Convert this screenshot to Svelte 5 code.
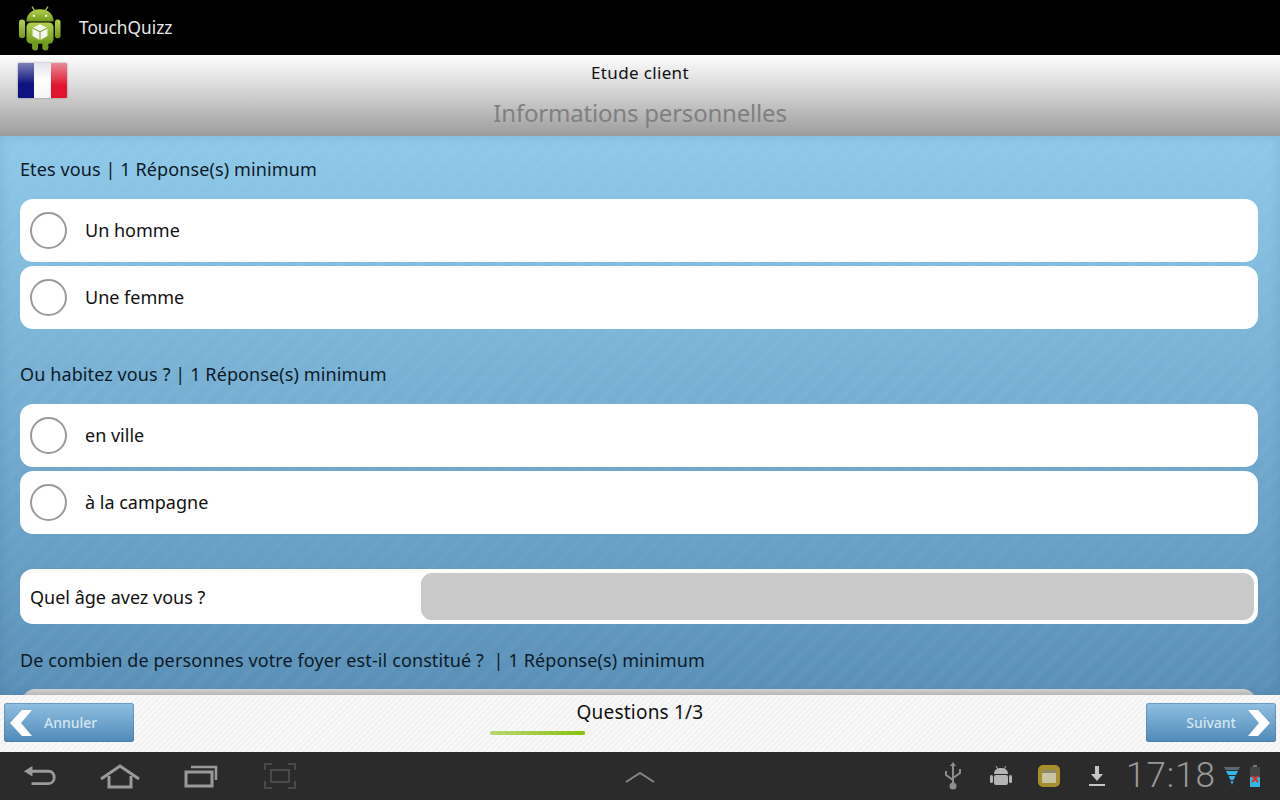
<script>
  // Survey screen of the quiz app, on an Android 3 tablet frame
  const questions = [
    { label: 'Etes vous | 1 Réponse(s) minimum', options: ['Un homme', 'Une femme'] },
    { label: 'Ou habitez vous ? | 1 Réponse(s) minimum', options: ['en ville', 'à la campagne'] },
  ];
</script>

<div class="screen">
  <header class="actionbar">
    <svg class="logo" width="42" height="48" viewBox="0 4 45 48">
      <defs>
        <linearGradient id="droid" x1="0" y1="0" x2="0" y2="1">
          <stop offset="0" stop-color="#b4d24a" />
          <stop offset="1" stop-color="#6f9a1e" />
        </linearGradient>
      </defs>
      <path d="M14 5l3 5M31 5l-3 5" stroke="#9dbb3c" stroke-width="1.500" />
      <path d="M8 21c0-8 6-13 14.500-13S37 13 37 21z" fill="url(#droid)" />
      <circle cx="16" cy="15" r="1.300" fill="#f2f6dc" />
      <circle cx="29" cy="15" r="1.300" fill="#f2f6dc" />
      <rect x="8" y="22" width="29" height="23" rx="5" fill="url(#droid)" />
      <rect x="0" y="19" width="6.500" height="20" rx="3.200" fill="url(#droid)" />
      <rect x="38.500" y="19" width="6" height="20" rx="3" fill="url(#droid)" />
      <rect x="14" y="42" width="6.500" height="10" rx="3.200" fill="#6f9a1e" />
      <rect x="25" y="42" width="6.500" height="10" rx="3.200" fill="#6f9a1e" />
      <path d="M22.500 24l8 4v8.500l-8 4.500-8-4.500V28z" fill="#f4f6ee" />
      <path d="M22.500 32l8-4M22.500 32l-8-4M22.500 32v9" stroke="#8aa93a" stroke-width="1.300" fill="none" />
    </svg>
    <span class="app-name">TouchQuizz</span>
  </header>

  <section class="titlebar">
    <div class="flag"><i class="blue"></i><i class="white"></i><i class="red"></i></div>
    <div class="survey">Etude client</div>
    <h1>Informations personnelles</h1>
  </section>

  <main class="content">
    {#each questions as q}
      <p class="question">{q.label}</p>
      <div class="options">
        {#each q.options as option}
          <div class="option">
            <span class="radio"></span>
            <span>{option}</span>
          </div>
        {/each}
      </div>
    {/each}

    <div class="age">
      <span>Quel âge avez vous ?</span>
      <div class="input"></div>
    </div>

    <p class="question last">De combien de personnes votre foyer est-il constitué ? &nbsp;| 1 Réponse(s) minimum</p>
    <div class="option peek"></div>
  </main>

  <footer class="footer">
    <button class="nav-btn">
      <svg width="26" height="28" viewBox="0 0 26 28"><path d="M14 1h10L13 14l11 13H14L2 14z" fill="#fff" /></svg>
      <span>Annuler</span>
    </button>
    <div class="progress">
      <div class="count">Questions 1/3</div>
      <div class="track"><div class="fill"></div></div>
    </div>
    <button class="nav-btn next">
      <span>Suivant</span>
      <svg width="26" height="28" viewBox="0 0 26 28"><path d="M12 1H2l11 13L2 27h10l12-13z" fill="#fff" /></svg>
    </button>
  </footer>

  <nav class="systembar">
    <div class="softkeys">
      <svg width="34" height="28" viewBox="0 0 36 28" fill="none" stroke="#9a9a9a" stroke-width="3">
        <path d="M6 9h21c8 0 8 13 0 13H9" />
        <path d="M1 9l9-5.500v11z" fill="#9a9a9a" stroke="none" />
      </svg>
      <svg width="42" height="28" viewBox="0 0 42 28" fill="none" stroke="#9a9a9a" stroke-width="3">
        <path d="M2 17L21 4l19 13" />
        <path d="M10 14v11h22V14" />
      </svg>
      <svg width="34" height="28" viewBox="0 0 34 28" fill="none" stroke="#9a9a9a" stroke-width="3">
        <rect x="2" y="10" width="26" height="14" />
        <path d="M7 5h25v13" stroke-width="2.500" />
      </svg>
      <svg width="32" height="28" viewBox="0 0 32 28" fill="none" stroke="#4a4a4a" stroke-width="2">
        <path d="M1 8V2h7M24 2h7v6M31 19v7h-7M8 26H1v-7" />
        <rect x="7" y="8" width="18" height="12" />
      </svg>
    </div>
    <svg class="chevron" width="30" height="12" viewBox="0 0 30 12" fill="none" stroke="#858585" stroke-width="2"><path d="M1 11L15 2l14 9" /></svg>
    <div class="status">
      <div class="slot">
        <svg width="18" height="28" viewBox="0 0 18 28" fill="none" stroke="#8d8d8d" stroke-width="2">
          <path d="M9 2v21M2 9v4l7 5M16 7v4l-7 5" />
          <circle cx="9" cy="24" r="2.500" fill="#8d8d8d" />
          <path d="M9 0l-3 4h6z" fill="#8d8d8d" stroke="none" />
        </svg>
      </div>
      <div class="slot">
        <svg width="24" height="24" viewBox="0 0 24 24" fill="#b4b4b4">
          <path d="M7 2l2 3M17 2l-2 3" stroke="#b4b4b4" />
          <path d="M5 10c0-4 3-6 7-6s7 2 7 6z" />
          <rect x="5" y="11" width="14" height="10" rx="2" />
          <rect x="1" y="11" width="3" height="8" rx="1.500" />
          <rect x="20" y="11" width="3" height="8" rx="1.500" />
        </svg>
      </div>
      <div class="slot">
        <svg width="24" height="24" viewBox="0 0 24 24">
          <rect x="1" y="1" width="22" height="22" rx="5" fill="#a68f2c" />
          <rect x="5" y="6" width="14" height="13" rx="1" fill="#c9c4a4" />
          <rect x="5" y="6" width="14" height="3" fill="#8f8a6a" />
        </svg>
      </div>
      <div class="slot">
        <svg width="18" height="24" viewBox="0 0 18 24" fill="#c4c4c4">
          <path d="M7 2h4v8h4l-6 7-6-7h4z" />
          <rect x="1" y="20" width="16" height="2" />
        </svg>
      </div>
      <span class="clock">17:18</span>
      <svg class="wifi" width="16" height="20" viewBox="0 0 16 20">
        <path d="M0 1h16l-1.500 3h-13z" fill="#5a6a70" />
        <path d="M2 5h12l-2 4H4z" fill="#33b5e5" />
        <path d="M4.500 10h7l-2 4h-3z" fill="#33b5e5" />
        <path d="M6.500 15h3L8 19z" fill="#33b5e5" />
      </svg>
      <svg class="battery" width="12" height="24" viewBox="0 0 12 24">
        <rect x="4" y="1" width="4" height="2" fill="#777" />
        <rect x="1" y="3" width="10" height="20" fill="#444" />
        <rect x="1" y="13" width="10" height="10" fill="#33b5e5" />
        <path d="M3 12l6 6M9 12l-6 6" stroke="#d8352a" stroke-width="2" />
      </svg>
    </div>
  </nav>
</div>

<style>
  :global(body) { background: #000; }
  .screen {
    width: 1280px; height: 800px; display: flex; flex-direction: column; overflow: hidden;
    font-family: "Noto Sans", "Open Sans", sans-serif;
  }

  .actionbar {
    flex: 0 0 55px; background: #000; display: flex; align-items: center; padding: 0 0 0 19px; gap: 19px;
  }
  .logo { margin-top: 1px; }
  .app-name { color: #e6e6e6; font-size: 17.300px; margin-left: -1px; }

  .titlebar {
    flex: 0 0 81px; position: relative; text-align: center;
    background: linear-gradient(#fefefe, #d4d4d4 45%, #9c9c9c);
  }
  .flag {
    position: absolute; left: 18px; top: 8px; width: 49px; height: 35px; display: flex;
    border-radius: 1px; overflow: hidden; box-shadow: 0 0 2px rgba(40, 40, 60, .5);
  }
  .flag i { flex: 1; }
  .blue { background: linear-gradient(#7d7fb6, #0d1380 60%); }
  .white { background: linear-gradient(#e4e4ee, #fff 50%, #f4f4f8); }
  .red { background: linear-gradient(#ea8a96, #e2132c 65%); }
  .survey { color: #111; font-size: 17px; line-height: 22px; padding-top: 7px; letter-spacing: .35px; }
  h1 {
    margin: 13px 0 0; color: #808080; font-size: 24px; font-weight: 400; line-height: 32px; letter-spacing: -.2px;
  }

  .content {
    flex: 1; min-height: 0; overflow: hidden; padding: 0 22px 0 20px;
    background:
      repeating-linear-gradient(-45deg, rgba(255, 255, 255, .025) 0 6px, transparent 6px 14px),
      linear-gradient(#8fc9e9, #5a90b8);
    box-shadow: inset 0 0 12px rgba(20, 50, 80, .12);
  }
  .question {
    margin: 0; color: #0c1a26; font-size: 18px; line-height: 24px; height: 24px;
    padding-top: 21px; letter-spacing: .11px;
  }
  .options {
    display: flex; flex-direction: column; gap: 4px; margin: 18px 0 12px;
  }
  .option {
    height: 63px; box-sizing: border-box; padding: 0 0 1px 10px; background: #fff; border-radius: 13px;
    display: flex; align-items: center; gap: 18px; color: #111; font-size: 18px;
  }
  .radio {
    width: 33px; height: 33px; border: 2.500px solid #9a9a9a; border-radius: 50%; background: #fff;
  }
  .age {
    margin-top: 35px; height: 55px; background: #fff; border-radius: 13px; display: flex;
    align-items: center; justify-content: space-between; padding: 0 4px 0 10px; color: #111; font-size: 18px;
  }
  .input { width: 833px; height: 47px; background: #c9c9c9; border-radius: 11px; }
  .question.last { padding-top: 24px; }
  .peek { margin: 17px 2px 0; background: linear-gradient(#d0d0d0, #aeaeae 8px); }

  .footer {
    flex: 0 0 57px; position: relative; display: flex; align-items: flex-start; justify-content: space-between;
    padding: 8px 4px 0; box-sizing: border-box;
    background: repeating-linear-gradient(-45deg, #f9f9f9 0 2px, #f2f2f2 2px 4px);
    z-index: 1;
  }
  .nav-btn {
    width: 130px; height: 39px; padding: 0 4px; border: 0; border-radius: 3px;
    background: linear-gradient(#90bfe0, #4f8ab8);
    box-shadow: inset 0 0 0 1px rgba(70, 120, 160, .5);
    display: flex; align-items: center; gap: 10px; color: #d5e6f2; font: 500 14px "Noto Sans", sans-serif;
  }
  .nav-btn.next { justify-content: flex-end; }
  .progress { width: 300px; position: relative; margin-left: -3px; }
  .count { text-align: center; color: #111; font-size: 19px; line-height: 24px; margin: -3px 0 0 3px; letter-spacing: .2px; }
  .track { width: 95px; height: 4px; margin: 7px 0 0 1px; background: #c8d8a0; border-radius: 2px; }
  .fill { height: 100%; border-radius: 2px; background: linear-gradient(90deg, #b8d870, #8ac010); }

  .systembar {
    flex: 0 0 48px; background: #2b2b2b; display: flex; align-items: center; position: relative;
  }
  .softkeys { display: flex; align-items: center; gap: 44px; padding-left: 23px; }
  .softkeys svg:nth-child(2) { margin-left: -2px; }
  .softkeys svg:nth-child(3) { margin-left: -1px; }
  .softkeys svg:nth-child(4) { margin-left: 2px; }
  .chevron { position: absolute; left: 625px; top: 19px; }
  .status { margin-left: auto; display: flex; align-items: center; padding-right: 19px; }
  .slot { width: 48px; display: flex; justify-content: center; }
  .slot svg { display: block; }
  .clock {
    color: #999; font-size: 35px; line-height: 48px; font-weight: 300; letter-spacing: 1px;
    font-family: "Roboto", "Open Sans", sans-serif; margin: 0 8px 0 5px;
  }
  .battery { margin-left: 9px; }
</style>
